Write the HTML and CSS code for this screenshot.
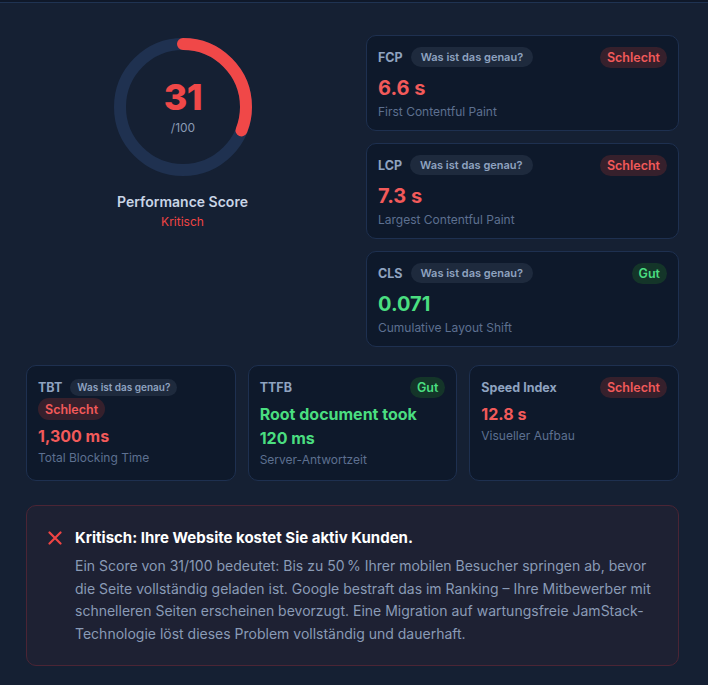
FILE: index.html
```html
<!DOCTYPE html>
<html lang="de">
<head>
<meta charset="utf-8">
<link rel="stylesheet" href="styles.css">
</head>
<body>
<div class="page">
  <div class="top">
    <div class="score">
      <svg class="gauge" width="140" height="140" viewBox="0 0 140 140">
        <circle cx="70" cy="70" r="63" fill="none" stroke="#1f3150" stroke-width="12"/>
        <circle cx="70" cy="70" r="63" fill="none" stroke="#f04848" stroke-width="12" stroke-linecap="round" stroke-dasharray="122.7 400" transform="rotate(-90 70 70)"/>
        <text x="70" y="73" text-anchor="middle" class="g-num">31</text>
        <text x="70" y="95" text-anchor="middle" class="g-max">/100</text>
      </svg>
      <div class="score-title">Performance Score</div>
      <div class="score-state">Kritisch</div>
    </div>
    <div class="stack">
      <div class="card">
        <div class="head">
          <div class="head-l"><span class="lbl">FCP</span><span class="pill">Was ist das genau?</span></div>
          <span class="badge bad">Schlecht</span>
        </div>
        <div class="val red">6.6 s</div>
        <div class="desc">First Contentful Paint</div>
      </div>
      <div class="card">
        <div class="head">
          <div class="head-l"><span class="lbl">LCP</span><span class="pill">Was ist das genau?</span></div>
          <span class="badge bad">Schlecht</span>
        </div>
        <div class="val red">7.3 s</div>
        <div class="desc">Largest Contentful Paint</div>
      </div>
      <div class="card">
        <div class="head">
          <div class="head-l"><span class="lbl">CLS</span><span class="pill">Was ist das genau?</span></div>
          <span class="badge good">Gut</span>
        </div>
        <div class="val green">0.071</div>
        <div class="desc">Cumulative Layout Shift</div>
      </div>
    </div>
  </div>
  <div class="row">
    <div class="card small">
      <div class="head wrap">
        <div class="head-l"><span class="lbl">TBT</span><span class="pill pill-sm">Was ist das genau?</span></div>
        <span class="badge bad">Schlecht</span>
      </div>
      <div class="val sm red">1,300 ms</div>
      <div class="desc">Total Blocking Time</div>
    </div>
    <div class="card small">
      <div class="head">
        <div class="head-l"><span class="lbl">TTFB</span></div>
        <span class="badge good">Gut</span>
      </div>
      <div class="val sm green">Root document took 120 ms</div>
      <div class="desc">Server-Antwortzeit</div>
    </div>
    <div class="card small">
      <div class="head">
        <div class="head-l"><span class="lbl">Speed Index</span></div>
        <span class="badge bad">Schlecht</span>
      </div>
      <div class="val sm red">12.8 s</div>
      <div class="desc">Visueller Aufbau</div>
    </div>
  </div>
  <div class="alert">
    <svg class="x" width="14" height="14" viewBox="0 0 14 14"><path d="M1.5 1.5 L12.5 12.5 M12.5 1.5 L1.5 12.5" stroke="#ef4444" stroke-width="2.2" stroke-linecap="round"/></svg>
    <div class="alert-body">
      <div class="alert-title">Kritisch: Ihre Website kostet Sie aktiv Kunden.</div>
      <p class="alert-text">Ein Score von 31/100 bedeutet: Bis zu 50&#8239;% Ihrer mobilen Besucher springen ab, bevor die Seite vollständig geladen ist. Google bestraft das im Ranking – Ihre Mitbewerber mit schnelleren Seiten erscheinen bevorzugt. Eine Migration auf wartungsfreie JamStack-Technologie löst dieses Problem vollständig und dauerhaft.</p>
    </div>
  </div>
</div>
</body>
</html>
```
FILE: styles.css
```css
html, body {
  margin: 0;
  padding: 0;
  background: #152033;
}
body {
  font-family: Inter, "Noto Sans", sans-serif;
  border-top: 2px solid #0f1829;
}
.page {
  border-top: 1px solid #1f3352;
  padding: 32px 29px 20px 26px;
}
.top {
  display: grid;
  grid-template-columns: 1fr 1fr;
  column-gap: 27px;
}
.score {
  display: flex;
  flex-direction: column;
  align-items: center;
  padding-top: 2px;
}
.gauge { display: block; }
.g-num {
  font-size: 36px;
  font-weight: 800;
  fill: #f04848;
  letter-spacing: -0.5px;
}
.g-max {
  font-size: 12px;
  fill: #8a9ab3;
}
.score-title {
  margin-top: 15px;
  font-size: 14px;
  font-weight: 600;
  line-height: 20px;
  color: #c9d5e6;
}
.score-state {
  margin-top: 1px;
  font-size: 12px;
  line-height: 18px;
  color: #ef4444;
}
.stack {
  display: flex;
  flex-direction: column;
  gap: 12px;
}
.card {
  background: #0e192b;
  border: 1px solid #1e3050;
  border-radius: 10px;
  padding: 10px 11px 9px 11px;
}
.card.small {
  padding: 10px 11px 11px 11px;
}
.head {
  display: flex;
  justify-content: space-between;
  align-items: center;
  min-height: 22px;
}
.head.wrap {
  flex-wrap: wrap;
}
.head.wrap > * {
  min-height: 22px;
}
.head-l {
  display: flex;
  align-items: center;
  gap: 8px;
}
.lbl {
  font-size: 12.5px;
  font-weight: 700;
  color: #8fa3c0;
}
.pill {
  background: #1e2a3d;
  color: #8fa3c0;
  font-size: 11px;
  font-weight: 600;
  line-height: 20px;
  padding: 0 10px;
  border-radius: 999px;
}
.pill.pill-sm {
  font-size: 10px;
  line-height: 17px;
  padding: 0 7px;
}
.badge {
  font-size: 12.5px;
  font-weight: 600;
  line-height: 21px;
  padding: 0 7px;
  border-radius: 999px;
}
.head.wrap > .badge {
  display: flex;
  align-items: center;
}
.badge.bad {
  background: #36202c;
  color: #f25a5a;
}
.badge.good {
  background: #143529;
  color: #4ade80;
}
.val {
  font-size: 20px;
  font-weight: 700;
  line-height: 28px;
  margin-top: 6px;
}
.val.sm {
  font-size: 16px;
  line-height: 24px;
  margin-top: 4px;
}
.red { color: #f25a5a; }
.green { color: #4ade80; }
.desc {
  font-size: 12px;
  line-height: 18px;
  color: #5d7090;
  margin-top: 1px;
}
.row {
  display: grid;
  grid-template-columns: 1fr 1fr 1fr;
  gap: 12px;
  margin-top: 18px;
}
.alert {
  margin-top: 24px;
  background: #1e2133;
  border: 1px solid #4b2535;
  border-radius: 10px;
  padding: 21px 21px 20px 21px;
  display: flex;
  gap: 13px;
  align-items: flex-start;
}
.x {
  flex: none;
  margin-top: 4px;
}
.alert-title {
  font-size: 15px;
  font-weight: 700;
  line-height: 22px;
  color: #ffffff;
}
.alert-text {
  margin: 6px 0 0 0;
  font-size: 14px;
  line-height: 22.5px;
  color: #8a9bb6;
}
```
